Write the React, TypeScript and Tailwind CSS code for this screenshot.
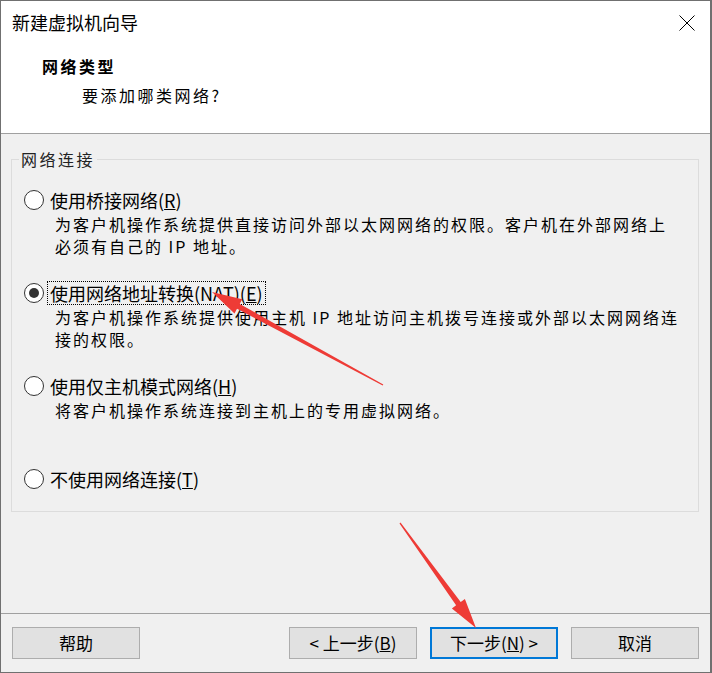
import React from "react";

const FONT = '"Noto Sans CJK SC", "Microsoft YaHei", sans-serif';

function arrowPoints(x1: number, y1: number, x2: number, y2: number, headLen = 30, headW = 9, tailW = 0.6, neckW = 3) {
  const dx = x2 - x1;
  const dy = y2 - y1;
  const L = Math.hypot(dx, dy);
  const ux = dx / L;
  const uy = dy / L;
  const px = -uy;
  const py = ux;
  const bx = x2 - ux * headLen;
  const by = y2 - uy * headLen;
  const pts: [number, number][] = [
    [x1 + px * tailW, y1 + py * tailW],
    [bx + px * neckW, by + py * neckW],
    [bx + px * headW, by + py * headW],
    [x2, y2],
    [bx - px * headW, by - py * headW],
    [bx - px * neckW, by - py * neckW],
    [x1 - px * tailW, y1 - py * tailW],
  ];
  return pts.map((p) => `${p[0].toFixed(1)},${p[1].toFixed(1)}`).join(" ");
}

function Radio({ checked }: { checked?: boolean }) {
  return (
    <span className="w-[20px] h-[20px] rounded-full border border-[#333333] bg-white flex items-center justify-center shrink-0">
      {checked && <span className="w-[10px] h-[10px] rounded-full bg-[#333333]" />}
    </span>
  );
}

function Option({
  checked,
  label,
  focused,
  children,
}: {
  checked?: boolean;
  label: React.ReactNode;
  focused?: boolean;
  children?: React.ReactNode;
}) {
  return (
    <div className="h-[93px]">
      <div className="flex items-center h-[24px]">
        <Radio checked={checked} />
        <span
          className={
            "text-[18px] leading-[22px] text-black " +
            (focused ? "ml-[4px] px-[2px] outline outline-1 outline-dotted outline-black" : "ml-[6px]")
          }
        >
          {label}
        </span>
      </div>
      {children && (
        <div className="pl-[31px] mt-[1px] text-[16px] tracking-[2px] leading-[22px] text-black whitespace-nowrap">{children}</div>
      )}
    </div>
  );
}

function Btn({ children, focused }: { children: React.ReactNode; focused?: boolean }) {
  return (
    <button
      className={
        "w-[128px] h-[32px] bg-[#e1e1e1] text-[17px] text-black flex items-center justify-center " +
        (focused ? "border-2 border-[#0078d7]" : "border border-[#adadad]")
      }
    >
      {children}
    </button>
  );
}

export default function App() {
  return (
    <div
      className="relative w-[712px] h-[673px] flex flex-col border-l border-t border-b border-r-2 border-[#707070] bg-[#f0f0f0] overflow-hidden"
      style={{ fontFamily: FONT }}
    >
      {/* Title bar */}
      <div className="h-[43px] bg-white flex items-center justify-between pl-[11px] pr-[15px]">
        <span className="text-[18px] text-black">新建虚拟机向导</span>
        <svg width="16" height="16" viewBox="0 0 16 16">
          <path d="M0.5 0.5 L15.5 15.5 M15.5 0.5 L0.5 15.5" stroke="#000" strokeWidth="1" />
        </svg>
      </div>

      {/* Header */}
      <div className="h-[90px] bg-white border-b border-[#a0a0a0] pt-[11px]">
        <div className="pl-[41px] text-[16px] font-bold tracking-[2.5px] leading-[22px] text-black">网络类型</div>
        <div className="pl-[81px] mt-[7px] text-[16px] tracking-[2.5px] leading-[22px] text-black">要添加哪类网络?</div>
      </div>

      {/* Body */}
      <div className="flex-1 pt-[14px] pl-[10px]">
        <fieldset className="w-[688px] h-[364px] border border-[#dcdcdc] pl-[7px] pt-[18px]">
          <legend className="px-[2px] text-[16px] tracking-[2.5px] leading-[22px] text-[#222]">网络连接</legend>
          <div className="pl-[5px]">
            <Option
              label={
                <>
                  使用桥接网络(<u>R</u>)
                </>
              }
            >
              为客户机操作系统提供直接访问外部以太网网络的权限。客户机在外部网络上
              <br />
              必须有自己的 IP 地址。
            </Option>
            <Option
              checked
              focused
              label={
                <>
                  使用网络地址转换(NAT)(<u>E</u>)
                </>
              }
            >
              为客户机操作系统提供使用主机 IP 地址访问主机拨号连接或外部以太网网络连
              <br />
              接的权限。
            </Option>
            <Option
              label={
                <>
                  使用仅主机模式网络(<u>H</u>)
                </>
              }
            >
              将客户机操作系统连接到主机上的专用虚拟网络。
            </Option>
            <Option
              label={
                <>
                  不使用网络连接(<u>T</u>)
                </>
              }
            />
          </div>
        </fieldset>
      </div>

      {/* Footer */}
      <div className="h-[59px] border-t border-[#a0a0a0] pt-[13px] pl-[11px] pr-[11px] flex items-start">
        <Btn>帮助</Btn>
        <div className="flex-1" />
        <div className="flex gap-[13px]">
          <Btn>
            &lt;&nbsp;上一步(<u>B</u>)
          </Btn>
          <Btn focused>
            下一步(<u>N</u>)&nbsp;&gt;
          </Btn>
          <Btn>取消</Btn>
        </div>
      </div>

      {/* Annotation arrows */}
      <svg className="absolute left-[-1px] top-[-1px] pointer-events-none" width="712" height="673" viewBox="0 0 712 673">
        <polygon points={arrowPoints(383, 385, 212, 292, 30, 8, 0.6, 2.8)} fill="#ee3b36" />
        <polygon points={arrowPoints(400, 523, 476, 628, 30, 8, 0.6, 2.8)} fill="#ee3b36" />
      </svg>
    </div>
  );
}
